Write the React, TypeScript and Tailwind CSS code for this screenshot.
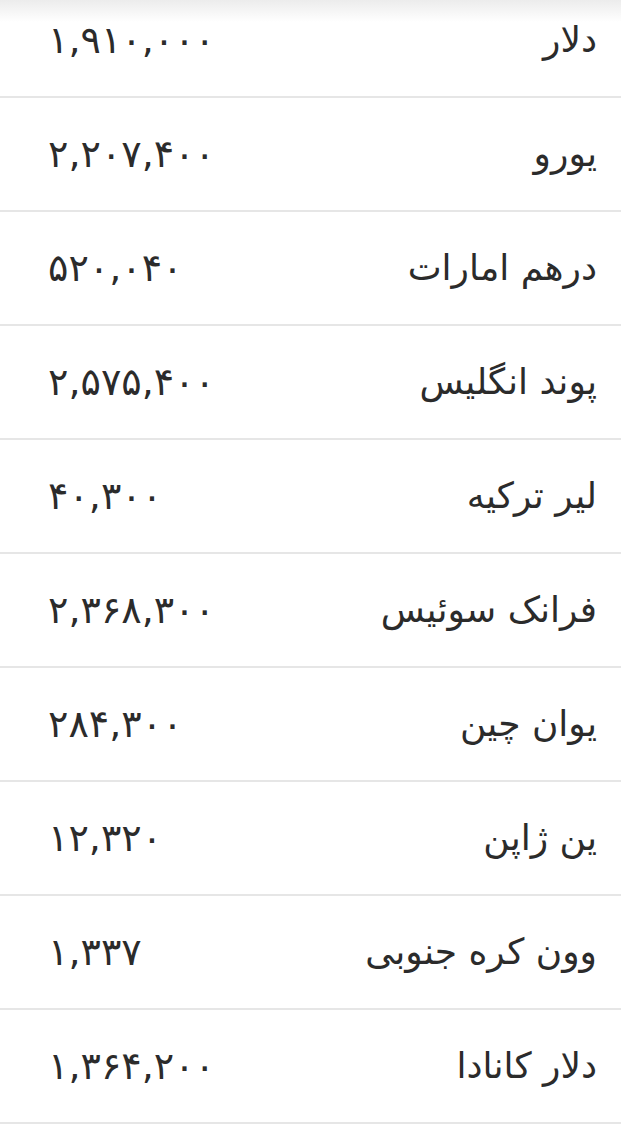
const rates = [
  { name: "دلار", price: "۱,۹۱۰,۰۰۰" },
  { name: "یورو", price: "۲,۲۰۷,۴۰۰" },
  { name: "درهم امارات", price: "۵۲۰,۰۴۰" },
  { name: "پوند انگلیس", price: "۲,۵۷۵,۴۰۰" },
  { name: "لیر ترکیه", price: "۴۰,۳۰۰" },
  { name: "فرانک سوئیس", price: "۲,۳۶۸,۳۰۰" },
  { name: "یوان چین", price: "۲۸۴,۳۰۰" },
  { name: "ین ژاپن", price: "۱۲,۳۲۰" },
  { name: "وون کره جنوبی", price: "۱,۳۳۷" },
  { name: "دلار کانادا", price: "۱,۳۶۴,۲۰۰" },
];

export default function App() {
  return (
    <div className="relative h-[1127px] overflow-hidden bg-white font-['DejaVu_Sans',sans-serif] text-[#2b2b2b]">
      <div className="absolute inset-x-0 top-0 h-[22px] bg-gradient-to-b from-[#ececec] to-white/0" />
      <div dir="rtl" className="-mt-[16px]">
        {rates.map((r) => (
          <div
            key={r.name}
            className="flex h-[114px] items-center justify-between border-b-2 border-[#e6e6e6] pr-6 pl-12"
          >
            <span className="text-[36px] leading-none">{r.name}</span>
            <span className="text-[38px] leading-none" dir="ltr">{r.price}</span>
          </div>
        ))}
      </div>
    </div>
  );
}
